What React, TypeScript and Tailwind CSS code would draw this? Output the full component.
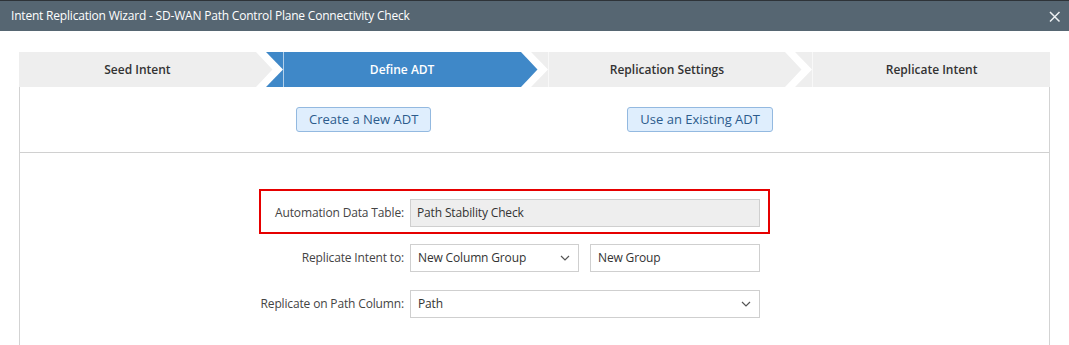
import React from "react";

const font = { fontFamily: "'Open Sans', 'Noto Sans', Arial, sans-serif" };

// arrow between two steps: tip of the left step over the colour of the right one
const StepArrow = ({ from, to }: { from: string; to: string }) => (
  <svg width="28" height="35" viewBox="0 0 28 35" className="shrink-0 block">
    <rect x="0" y="0" width="28" height="35" fill={to} />
    <polygon points="0,0 10,0 27,17.5 10,35 0,35" fill="#ffffff" />
    <polygon points="0,0 16.5,17.5 0,35" fill={from} />
    <line x1="27.5" y1="0" x2="27.5" y2="35" stroke="#ffffff" strokeOpacity="0.6" />
  </svg>
);

const Chevron = () => (
  <svg width="10" height="6" viewBox="0 0 10 6" className="shrink-0">
    <path d="M1 1l4 4 4-4" fill="none" stroke="#555" strokeWidth="1.2" />
  </svg>
);

const Select = ({ value, className }: { value: string; className: string }) => (
  <div className={`h-[28px] flex items-center justify-between border border-[#cfcfcf] bg-white pl-[7px] pr-[8px] text-[12px] text-[#333] ${className}`}>
    <span>{value}</span>
    <Chevron />
  </div>
);

const App = () => {
  const gray = "#eeeeee";
  const blue = "#3f88c8";

  return (
    <div className="w-[1069px] h-[345px] overflow-hidden bg-white" style={font}>
      {/* title bar */}
      <div className="h-[31px] bg-[#566672] border-t border-[#2e3338] flex items-center justify-between pl-[11px] pr-[8px]">
        <span className="text-[12px] text-white tracking-[-0.2px]">
          Intent Replication Wizard - SD-WAN Path Control Plane Connectivity Check
        </span>
        <svg width="13" height="13" viewBox="0 0 13 13">
          <path d="M2 2l9.5 9.5M11.5 2L2 11.5" stroke="#eef1f3" strokeWidth="1.5" />
        </svg>
      </div>

      <div className="mx-[19px] mt-[21px]">
        {/* steps */}
        <div className="flex h-[35px] text-[12px] font-semibold">
          <div className="flex-1 flex items-center justify-center bg-[#eeeeee] text-[#333]">Seed Intent</div>
          <StepArrow from={gray} to={blue} />
          <div className="flex-1 flex items-center justify-center bg-[#3f88c8] text-white">Define ADT</div>
          <StepArrow from={blue} to={gray} />
          <div className="flex-1 flex items-center justify-center bg-[#eeeeee] text-[#333]">Replication Settings</div>
          <StepArrow from={gray} to={gray} />
          <div className="flex-1 flex items-center justify-center bg-[#eeeeee] text-[#333]">Replicate Intent</div>
        </div>

        {/* panel */}
        <div className="border-x border-[#d3d3d3] h-[300px]">
          <div className="flex justify-center gap-[196px] pt-[20px] pb-[20px] border-b border-[#d0d0d0]">
            <button className="h-[25px] px-[12px] rounded-[3px] border border-[#93b9e0] bg-[#dfeefd] text-[13px] text-[#2c5b8c]">
              Create a New ADT
            </button>
            <button className="h-[25px] px-[12px] rounded-[3px] border border-[#93b9e0] bg-[#dfeefd] text-[13px] text-[#2c5b8c]">
              Use an Existing ADT
            </button>
          </div>

          <div className="ml-[239px] w-[511px] pt-[36px] text-[12px] tracking-[-0.15px] whitespace-nowrap">
            <div className="border-2 border-[#e60000] pt-[8px] pb-[5px] pr-[8px] flex items-center">
              <label className="w-[149px] pr-[6px] text-right text-[#444]">Automation Data Table:</label>
              <div className="flex-1 h-[28px] flex items-center border border-[#cfcfcf] bg-[#eeeeee] px-[6px] text-[#333]">
                Path Stability Check
              </div>
            </div>

            <div className="mt-[10px] pr-[10px] flex items-center">
              <label className="w-[151px] shrink-0 pr-[6px] text-right text-[#444]">Replicate Intent to:</label>
              <Select value="New Column Group" className="w-[169px]" />
              <div className="ml-[11px] flex-1 h-[28px] flex items-center border border-[#cfcfcf] bg-white px-[7px] text-[#333]">
                New Group
              </div>
            </div>

            <div className="mt-[18px] pr-[10px] flex items-center">
              <label className="w-[151px] shrink-0 pr-[6px] text-right text-[#444]">Replicate on Path Column:</label>
              <Select value="Path" className="flex-1" />
            </div>
          </div>
        </div>
      </div>
    </div>
  );
};

export default App;
